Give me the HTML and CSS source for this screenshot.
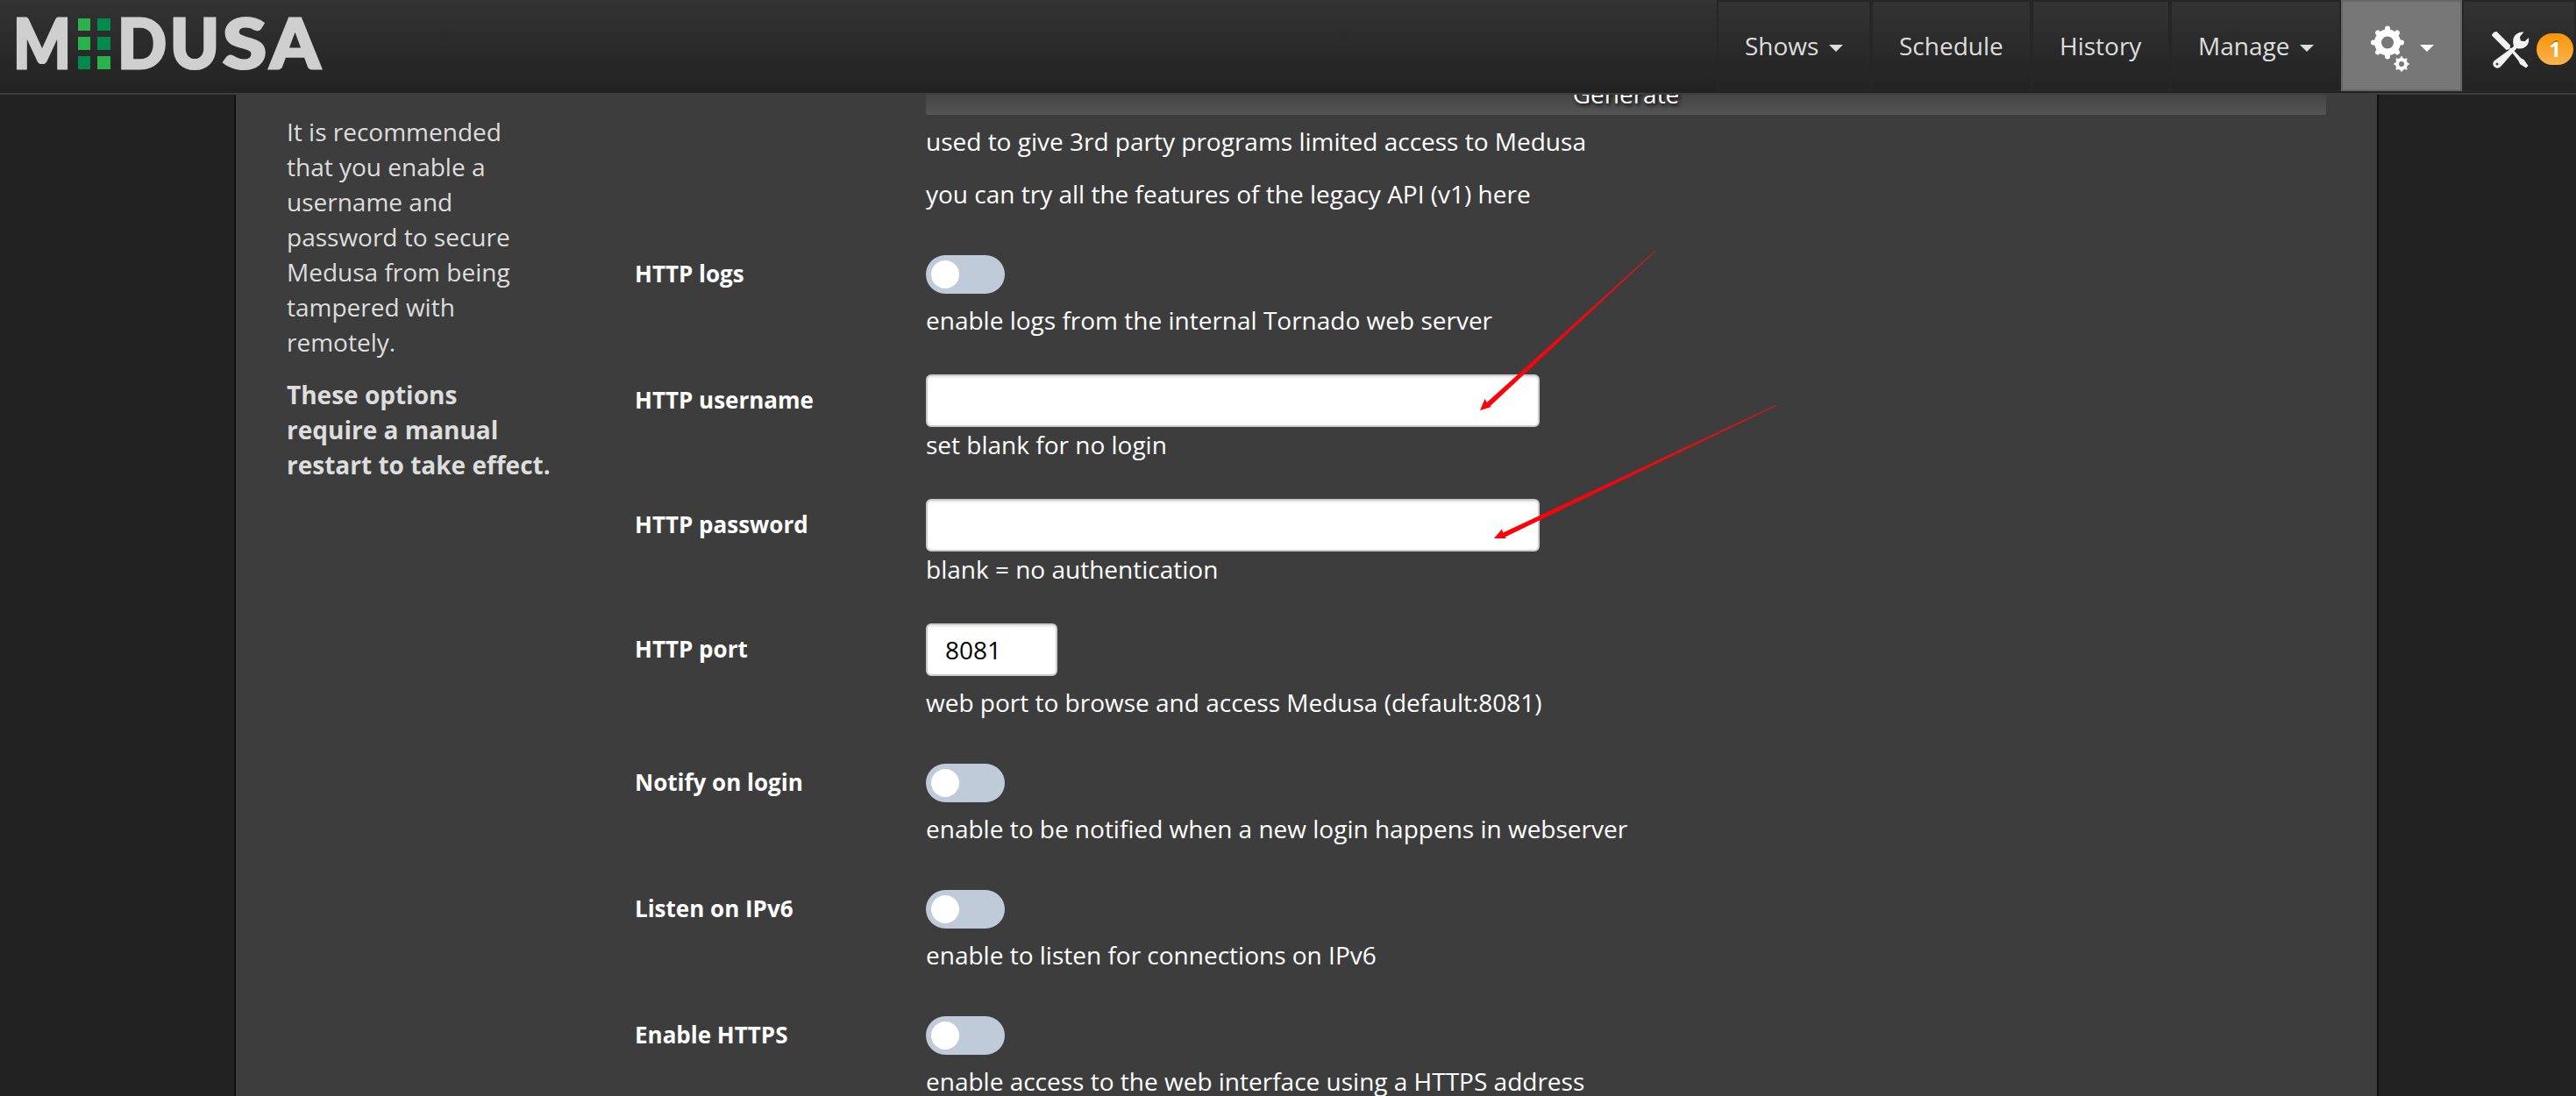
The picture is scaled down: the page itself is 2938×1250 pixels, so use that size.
FILE: index.html
```html
<!doctype html>
<html lang="en">
<head>
  <meta charset="UTF-8">
  <meta name="viewport" content="width=device-width, initial-scale=1.0">
  <title>Medusa - Config</title>
  <link rel="stylesheet" href="styles.css">
</head>
<body>
  <nav class="navbar">
    <a class="brand">
      <svg width="400" height="104" viewBox="0 0 400 104">
        <text class="logo-text" y="78" x="15" textLength="66" lengthAdjust="spacingAndGlyphs">M</text>
        <rect class="light" x="89" y="21" width="14" height="14"/>
        <rect class="dark" x="111" y="21" width="15" height="14"/>
        <rect class="light" x="89" y="42" width="14" height="15"/>
        <rect class="dark" x="111" y="42" width="15" height="15"/>
        <rect class="dark" x="89" y="64" width="14" height="15"/>
        <rect class="light" x="111" y="64" width="15" height="15"/>
        <text class="logo-text" y="78" x="134" textLength="56" lengthAdjust="spacingAndGlyphs">D</text>
        <text class="logo-text" y="78" x="194" textLength="56" lengthAdjust="spacingAndGlyphs">U</text>
        <text class="logo-text" y="78" x="254" textLength="50" lengthAdjust="spacingAndGlyphs">S</text>
        <text class="logo-text" y="78" x="308" textLength="57" lengthAdjust="spacingAndGlyphs">A</text>
      </svg>
    </a>
    <ul class="menu">
      <li class="w-shows">Shows<span class="caret"></span></li>
      <li class="w-schedule">Schedule</li>
      <li class="w-history">History</li>
      <li class="w-manage">Manage<span class="caret"></span></li>
      <li class="w-config active">
        <svg class="gears" width="48" height="56" viewBox="0 0 48 56">
          <g fill="none" stroke="#fff">
            <circle cx="21" cy="21.5" r="11" stroke-width="8"/>
            <circle cx="37" cy="46" r="5" stroke-width="4"/>
          </g>
          <g stroke="#fff" stroke-width="7" stroke-linecap="round">
            <path d="M21 7V5.5M21 36v1.500M6.500 21.500H5M35.500 21.500H37M11 11.500l-1-1M31 11.500l1-1M11 31.500l-1 1M31 31.500l1 1" stroke-width="6"/>
            <path d="M37 39.500v-1M37 52.500v1M30.500 46h-1M43.500 46h1M32.500 41.500l-.8-.8M41.500 41.500l.8-.8M32.500 50.500l-.8.8M41.500 50.500l.8.8" stroke-width="2.600"/>
          </g>
        </svg>
        <span class="caret"></span>
      </li>
      <li class="w-tools">
        <svg class="tools" width="44" height="44" viewBox="0 0 44 44">
          <g fill="#f2f2f2">
            <path d="M1 5.500Q2 1 6.500 1L22 16.500l-.5 4.500-4 1z"/>
            <path d="M21 21l2-1.500L34.500 31.500l3 1.500 5 7-2.500 2.500-7-4.500-1.500-3.500z"/>
            <path d="M26 18q-3-10 3.500-14.500Q33 1 37.500 1.500L33 7l.8 4.500 4.700.8L43 8q1 5-2 9-5 5-11.500 3L12 40q-3 4-7 2-4.500-3-1.500-7.500z"/>
          </g>
          <circle cx="7" cy="38" r="1.500" fill="#444"/>
        </svg>
        <span class="badge">1</span>
      </li>
    </ul>
  </nav>

  <div class="content">
    <aside class="component-desc">
      <p>It is recommended that you enable a username and password to secure Medusa from being tampered with remotely.</p>
      <p><b>These options require a manual restart to take effect.</b></p>
    </aside>

    <div class="component-group">
      <div class="form-group first">
        <label></label>
        <div class="field">
          <div class="btn">Generate</div>
          <p>used to give 3rd party programs limited access to Medusa</p>
          <p class="spaced">you can try all the features of the legacy API (v1) here</p>
        </div>
      </div>

      <div class="form-group">
        <label>HTTP logs</label>
        <div class="field">
          <div class="toggle"></div>
          <p>enable logs from the internal Tornado web server</p>
        </div>
      </div>

      <div class="form-group">
        <label>HTTP username</label>
        <div class="field">
          <input type="text" class="form-control">
          <p>set blank for no login</p>
        </div>
      </div>

      <div class="form-group">
        <label>HTTP password</label>
        <div class="field">
          <input type="password" class="form-control">
          <p>blank = no authentication</p>
        </div>
      </div>

      <div class="form-group">
        <label>HTTP port</label>
        <div class="field">
          <input type="text" class="form-control port" value="8081">
          <p>web port to browse and access Medusa (default:8081)</p>
        </div>
      </div>

      <div class="form-group">
        <label>Notify on login</label>
        <div class="field">
          <div class="toggle"></div>
          <p>enable to be notified when a new login happens in webserver</p>
        </div>
      </div>

      <div class="form-group">
        <label>Listen on IPv6</label>
        <div class="field">
          <div class="toggle"></div>
          <p>enable to listen for connections on IPv6</p>
        </div>
      </div>

      <div class="form-group">
        <label>Enable HTTPS</label>
        <div class="field">
          <div class="toggle"></div>
          <p>enable access to the web interface using a HTTPS address</p>
        </div>
      </div>
    </div>
  </div>

  <!-- arrows pointing at the login fields -->
  <svg class="arrows" width="350" height="340" viewBox="1680 280 350 340">
    <defs>
      <linearGradient id="fade1" gradientUnits="userSpaceOnUse" x1="1688" y1="468" x2="1888" y2="286">
        <stop offset="0" stop-color="#ff0008"/>
        <stop offset=".5" stop-color="#f5060e"/>
        <stop offset="1" stop-color="#c81a20"/>
      </linearGradient>
      <linearGradient id="fade2" gradientUnits="userSpaceOnUse" x1="1704" y1="614" x2="2026" y2="462">
        <stop offset="0" stop-color="#ff0008"/>
        <stop offset=".5" stop-color="#f5060e"/>
        <stop offset="1" stop-color="#c81a20"/>
      </linearGradient>
    </defs>
    <path fill="url(#fade1)" d="M1688 468L1693.500 455L1695.800 459L1888 285.500L1888.600 286.200L1699.500 463.300L1701 464Z"/>
    <path fill="url(#fade2)" d="M1704 614L1713 603.500L1714.200 607.600L2026 461.500L2026.400 462.500L1716.500 612.600L1718 614Z"/>
  </svg>
</body>
</html>
```
FILE: styles.css
```css
* {
    box-sizing: border-box;
}
body {
    margin: 0;
    height: 1250px;
    overflow: hidden;
    background-color: #222;
    color: #fff;
    font-family: "Open Sans", sans-serif;
    font-size: 28px;
    line-height: 40px;
}
p {
    margin: 0;
}

/* navbar */
.navbar {
    position: fixed;
    top: 0;
    left: 0;
    z-index: 10;
    display: flex;
    justify-content: space-between;
    width: 100%;
    height: 108px;
    background: linear-gradient(#333, #222) padding-box;
    border-bottom: 2px solid #3e3f3a;
}
.brand svg {
    display: block;
}
.logo-text {
    font-family: Lato, sans-serif;
    font-size: 79px;
    font-weight: 900;
    fill: #cfcfcf;
    stroke: #cfcfcf;
    stroke-width: 3px;
}
.light {
    fill: #2bb24c;
}
.dark {
    fill: #008a4b;
}
.menu {
    display: flex;
    margin: 0;
    padding: 0;
    list-style: none;
}
.menu li {
    display: flex;
    align-items: center;
    height: 104px;
    padding: 0 0 1px 30px;
    border: 2px solid #262626;
    color: #ddd;
    white-space: nowrap;
}
.w-shows {
    width: 176px;
}
.w-schedule {
    width: 183px;
}
.w-history {
    width: 158px;
}
.w-manage {
    width: 195px;
}
.w-config {
    width: 138px;
}
.w-tools {
    width: 130px;
}
.menu .active {
    background-color: #777;
    border-color: #666;
}
.caret {
    margin: 7px 0 0 12px;
    border-top: 8px solid #ddd;
    border-left: 8px solid transparent;
    border-right: 8px solid transparent;
}
.active .caret {
    border-top-color: #fff;
    margin-left: 10px;
}
.gears {
    flex: none;
    margin-top: 6px;
}
.tools {
    flex: none;
    margin: 11px 0 0 1px;
}
.badge {
    flex: none;
    width: 42px;
    height: 36px;
    margin: 9px 0 0 8px;
    border-radius: 18px;
    background: linear-gradient(#f89406, #fbb450);
    color: #fff;
    font-size: 24px;
    font-weight: bold;
    line-height: 36px;
    text-align: center;
    text-shadow: 0 -2px 0 rgba(0, 0, 0, 0.25);
}

/* page */
.content {
    display: flex;
    width: 2446px;
    height: 1250px;
    margin-left: 267px;
    padding: 83px 58px 0 57px;
    overflow: hidden;
    background-color: #3d3d3d;
    border: solid #111;
    border-width: 0 2px;
}
.component-desc {
    flex: none;
    width: 398px;
    padding: 47px 94px 0 1px;
    color: #ddd;
}
.component-desc p {
    margin-bottom: 20px;
}
.component-group {
    display: flex;
    flex: 1;
    flex-direction: column;
    gap: 42px;
}
.form-group {
    display: flex;
    flex: none;
}
.form-group label {
    flex: none;
    width: 332px;
    padding-top: 9px;
    font-size: 26px;
    font-weight: bold;
}
.field {
    flex: 1;
}
.btn {
    height: 48px;
    margin-bottom: 10px;
    padding-top: 4px;
    border-radius: 2px;
    background: linear-gradient(#333, #555);
    text-align: center;
    text-shadow: 2px 2px 4px #000;
}
.spaced {
    margin-top: 20px;
}
.toggle {
    width: 90px;
    height: 44px;
    margin: 8px 0 10px;
    padding: 6px;
    border-radius: 22px;
    background-color: #bfcbd9;
}
.toggle::before {
    content: "";
    display: block;
    width: 32px;
    height: 32px;
    border-radius: 50%;
    background-color: #fff;
}
.form-control {
    display: block;
    width: 700px;
    height: 60px;
    padding: 0 20px;
    border: 2px solid #ccc;
    border-radius: 6px;
    background-color: #fff;
    box-shadow: inset 0 2px 2px rgba(0, 0, 0, 0.075);
    color: #000;
    font: 28px "Open Sans", sans-serif;
}
.port {
    width: 150px;
    margin-bottom: 10px;
}

.arrows {
    position: absolute;
    top: 280px;
    left: 1680px;
}
```
